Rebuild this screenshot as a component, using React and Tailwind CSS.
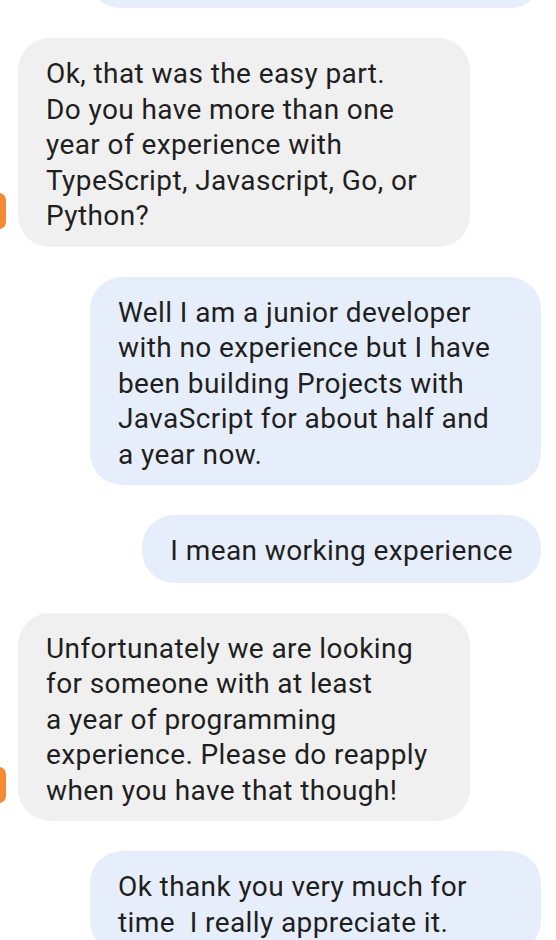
import React from "react";

const messages = [
  {
    from: "them",
    lines: [
      "Ok, that was the easy part.",
      "Do you have more than one",
      "year of experience with",
      "TypeScript, Javascript, Go, or",
      "Python?",
    ],
  },
  {
    from: "me",
    lines: [
      "Well I am a junior developer",
      "with no experience but I have",
      "been building Projects with",
      "JavaScript for about half and",
      "a year now.",
    ],
  },
  { from: "me", short: true, lines: ["I mean working experience"] },
  {
    from: "them",
    lines: [
      "Unfortunately we are looking",
      "for someone with at least",
      "a year of programming",
      "experience. Please do reapply",
      "when you have that though!",
    ],
  },
  {
    from: "me",
    lines: ["Ok thank you very much for", "time\u00a0 I really appreciate it."],
  },
];

function Bubble({ msg }) {
  const mine = msg.from === "me";
  return (
    <div className={`relative flex ${mine ? "justify-end pr-[15px]" : "justify-start pl-[18px]"}`}>
      {!mine && (
        // avatar peeking in from the left edge
        <div className="absolute left-[-8px] bottom-[18px] w-[14px] h-[36px] rounded-full bg-[#f58a32]" />
      )}
      <div
        className={`rounded-[32px] px-[28px] pt-[18px] pb-[13px] text-[28px] leading-[35.5px] tracking-[0.4px] text-[#1f1f1f] whitespace-nowrap ${
          mine ? "bg-[#e7eefb]" : "bg-[#f0f0f0]"
        } ${msg.short ? "pb-[14px]" : mine ? "w-[451px]" : "w-[452px]"}`}
      >
        {msg.lines.map((l, i) => (
          <div key={i}>{l}</div>
        ))}
      </div>
    </div>
  );
}

export default function App() {
  return (
    <div
      className="h-[940px] w-[556px] overflow-hidden bg-white"
      style={{ fontFamily: "Roboto, 'Noto Sans', sans-serif" }}
    >
      <div className="flex flex-col gap-[30px]">
        {/* tail of the previous message */}
        <div className="flex justify-end pr-[15px] -mt-[52px]">
          <div className="w-[451px] h-[60px] rounded-[32px] bg-[#e7eefb]" />
        </div>
        {messages.map((m, i) => (
          <Bubble key={i} msg={m} />
        ))}
      </div>
    </div>
  );
}
